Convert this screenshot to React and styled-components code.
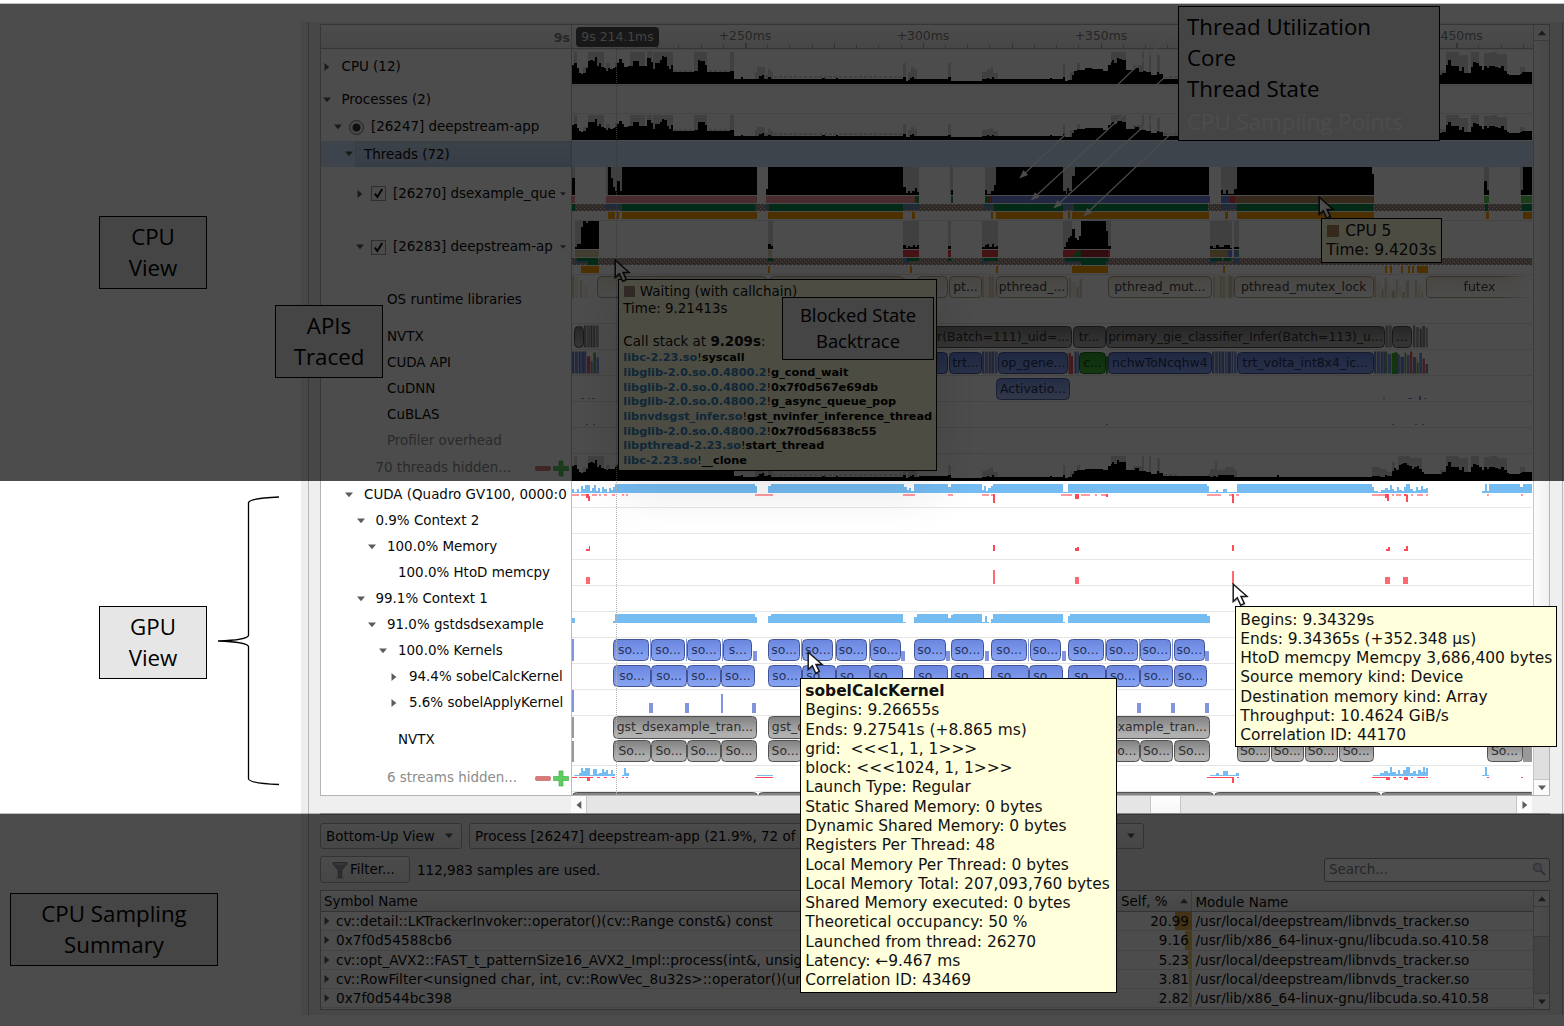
import React from "react";
import styled, { createGlobalStyle, css } from "styled-components";

const Global = createGlobalStyle`
  * { box-sizing: border-box; }
  body { margin: 0; background: #fff; overflow: hidden; }
`;

/* ---------- page ---------- */

const ui = css`font-family: "DejaVu Sans", sans-serif;`;

const Page = styled.div`
  ${ui}
  position: relative;
  display: flex;
  width: 1564px;
  height: 1026px;
  overflow: hidden;
  background: #fff;
  color: #0a0a0a;
  font-size: 13.45px;
`;

const Gutter = styled.aside`
  flex: 0 0 301px;
  padding-top: 216px;
`;

const Callout = styled.div`
  display: flex;
  flex-direction: column;
  justify-content: center;
  align-items: ${(p) => (p.$start ? "flex-start" : "center")};
  width: ${(p) => p.$w}px;
  height: ${(p) => p.$h || 73}px;
  margin: ${(p) => p.$m || "0"};
  padding: 0 0 ${(p) => (p.$start ? 0 : 2)}px ${(p) => (p.$start ? 8 : 0)}px;
  border: 1px solid #000;
  background: #e6e6e6;
  color: #000;
  font-family: "Open Sans", "Noto Sans", sans-serif;
  font-size: ${(p) => p.$size || 22.3}px;
  line-height: ${(p) => p.$line || 31}px;
  white-space: nowrap;
`;

const Floating = styled.div`
  position: absolute;
  left: ${(p) => p.$x}px;
  top: ${(p) => p.$y}px;
  line-height: 0;
`;

const Ghost = styled.span`
  margin-top: 2px;
  color: #fff;
`;

const Dim = styled.div`
  position: absolute;
  left: 0;
  right: 0;
  top: ${(p) => p.$y}px;
  height: ${(p) => p.$h}px;
  background: rgba(0, 0, 0, 0.7);
  box-shadow: 0 -1px 0 rgba(0, 0, 0, 0.25);
`;

/* ---------- window frame ---------- */

const Window = styled.main`
  flex: 1;
  height: 993px;
  margin-top: 22px;
  padding: 0 1px 0 7px;
  background: #eeeeee;
`;

const WindowBody = styled.div`
  height: 100%;
  padding: 2px 12px 0 11px;
  border: solid #b8b8b8;
  border-width: 0 1px;
  background: #efefef;
`;

const Timeline = styled.section`
  display: flex;
  height: 772px;
  border: 1px solid #b4b4b4;
  background: #fff;
`;

const Rows = styled.div`
  position: relative;
  width: 1212px;
  overflow: hidden;
`;

const Row = styled.div`
  display: flex;
  height: ${(p) => p.$h}px;
  background: ${(p) => (p.$on ? "#cfe3fa" : "transparent")};
`;

const TreeCell = styled.div`
  display: flex;
  align-items: center;
  flex: 0 0 251px;
  padding-left: ${(p) => p.$pad}px;
  padding-top: ${(p) => p.$drop}px;
  border-right: 1px solid #bcbcbc;
  overflow: hidden;
  white-space: nowrap;
  color: ${(p) => (p.$muted ? "#8c8c8c" : "#0a0a0a")};
`;

const ArrowSlot = styled.span`
  display: flex;
  flex: 0 0 ${(p) => (p.$tight ? 15 : 19)}px;
`;

const Label = styled.span`
  flex: 1;
  overflow: hidden;
  line-height: 20px;
`;

const Picked = styled.span`
  flex: 1;
  align-self: stretch;
  margin-left: -9px;
  padding-left: 8px;
  border: 1px solid #b9cbe3;
  background: linear-gradient(#c9dbf2, #bdd0e9);
  line-height: 25px;
`;

const Radio = styled.span`
  flex: 0 0 15px;
  height: 15px;
  margin-right: 7px;
  border: 1px solid #777;
  border-radius: 50%;
  background: radial-gradient(circle, #333 0 3.6px, #eee 4.4px);
`;

const Check = styled.span`
  display: flex;
  align-items: center;
  justify-content: center;
  flex: 0 0 15px;
  height: 15px;
  margin-right: 7px;
  border: 1px solid #999;
  background: #fafafa;
`;

const Tail = styled.span`
  display: flex;
  flex: 0 0 ${(p) => p.$w || 16}px;
  padding-left: ${(p) => p.$pad || 0}px;
`;

const Lane = styled.div`
  position: relative;
  flex: 0 0 960px;
  box-shadow: ${(p) => (p.$bare ? "none" : "inset 0 1px 0 #e6e6e6")};
  overflow: hidden;
`;

const Block = styled.span`
  ${ui}
  position: absolute;
  height: 22.4px;
  padding: 0 1px;
  border: 1px solid;
  border-radius: 4.5px;
  overflow: hidden;
  font-size: 12.4px;
  line-height: 20px;
  text-align: center;
  white-space: nowrap;
  ${(p) => tones[p.$tone]}
`;

const tones = {
  blue: "background:linear-gradient(#6a86de,#819ef0 75%,#88a3f0);border-color:#435596;color:#27325a;",
  pale: "background:linear-gradient(#7b97e8,#a9bdf4);border-color:#5268ab;color:#27325a;",
  gray: "background:linear-gradient(#828282,#b0b0b0 80%);border-color:#525252;color:#2e2e2e;",
  cream: "background:linear-gradient(#f3ecdc,#fff);border-color:#b7a68a;color:#444;",
  fade: "background:linear-gradient(#f3ecdc,#fff);border-color:#b7a68a;color:#444;border-right:0;border-radius:4.5px 0 0 4.5px;-webkit-mask-image:linear-gradient(90deg,#000 70%,transparent);",
  green: "background:linear-gradient(#2f9c2a,#46ba3c);border-color:#1f6b1c;color:#173c17;",
};

const Header = styled.div`
  display: flex;
  height: 24px;
  border-bottom: 1px solid #b4b4b4;
  background: linear-gradient(#fff, #ececec);
`;

const Origin = styled.div`
  flex: 0 0 251px;
  padding: 3px 1px 0 0;
  border-right: 1px solid #c8c8c8;
  color: #808080;
  font-size: 12.6px;
  font-weight: bold;
  line-height: 19px;
  text-align: right;
`;

const Ruler = styled.div`
  position: relative;
  flex: 0 0 960px;
`;

const TickLabel = styled.span`
  position: absolute;
  top: 3px;
  width: 80px;
  margin-left: -40px;
  color: #808080;
  font-size: 12.4px;
  line-height: 16px;
  text-align: center;
`;

const TimeBadge = styled.span`
  position: absolute;
  left: 4px;
  top: 2px;
  width: 83px;
  height: 20px;
  border-radius: 4px;
  background: #505050;
  color: #dedede;
  font-size: 12.4px;
  line-height: 20px;
  text-align: center;
`;

const Playhead = styled.i`
  position: absolute;
  left: 295px;
  top: 24px;
  bottom: 0;
  border-left: 1px dotted #b4b4b4;
`;

/* ---------- scrollbars ---------- */

const VBar = styled.div`
  display: flex;
  flex-direction: column;
  width: 16px;
  border-left: 1px solid #c6c6c6;
`;
const VBtn = styled.span`
  display: flex;
  align-items: center;
  justify-content: center;
  flex: 0 0 16px;
  border: solid #c6c6c6;
  border-width: ${(p) => (p.$down ? "1px 0 0" : "0 0 1px")};
  background: #fbfbfb;
`;
const VThumb = styled.span`
  height: ${(p) => p.$h}px;
  border-bottom: 1px solid #c0c0c0;
  background: linear-gradient(90deg, #fdfdfd, #f0f0f0);
`;
const VTrack = styled.span`flex: 1; background: #dfdfdf;`;

const HBar = styled.div`
  display: flex;
  height: 17px;
  margin-left: 251px;
  width: 961px;
  background: #e5e5e5;
`;
const HBtn = styled.span`
  display: flex;
  align-items: center;
  justify-content: center;
  width: 16px;
  border: solid #c6c6c6;
  border-width: ${(p) => (p.$right ? "0 0 0 1px" : "0 1px 0 0")};
  background: #fbfbfb;
`;
const HThumb = styled.span`
  width: 31px;
  margin: 0 auto 0 563px;
  border: solid #c6c6c6;
  border-width: 0 1px;
  background: linear-gradient(#fefefe, #f6f6f6);
`;

/* ---------- bottom pane ---------- */

const Pane = styled.section`
  border-top: 2px solid #b8b8b8;
  padding-top: 8px;
`;
const Bar = styled.div`
  display: flex;
  align-items: center;
  height: ${(p) => p.$h}px;
  margin-bottom: ${(p) => p.$mb}px;
`;
const Select = styled.div`
  display: flex;
  align-items: center;
  justify-content: space-between;
  width: ${(p) => p.$w}px;
  height: 26px;
  margin-right: 7px;
  padding: 0 8px 0 5px;
  border: 1px solid #aaa;
  border-radius: 3px;
  background: linear-gradient(#fbfbfb, #ebebeb);
  font-size: ${(p) => p.$size || 13.45}px;
  white-space: nowrap;
`;
const FilterButton = styled.div`
  display: flex;
  align-items: center;
  gap: 2px;
  width: 90px;
  height: 27px;
  padding-left: 11px;
  border: 1px solid #aaa;
  border-radius: 3px;
  background: linear-gradient(#fbfbfb, #ebebeb);
`;
const Count = styled.span`
  margin: 1px 0 0 7px;
  font-size: 13.5px;
`;
const Search = styled.div`
  display: flex;
  align-items: center;
  justify-content: space-between;
  width: 226px;
  height: 24px;
  margin-left: auto;
  padding: 0 3px 1px 4px;
  border: 1px solid #909090;
  border-radius: 3px;
  background: #fff;
  color: #808080;
`;
const Table = styled.div`
  display: flex;
  height: 120px;
  border: 1px solid #aaa;
  background: #fff;
`;
const Cols = styled.div`flex: 1;`;
const HeadRow = styled.div`
  display: flex;
  height: 21px;
  border-bottom: 1px solid #aaa;
  background: linear-gradient(#fff, #ececec);
  line-height: 23px;
`;
const DataRow = styled.div`
  display: flex;
  height: 19.3px;
  border-bottom: 1px solid #e4e4e4;
  font-size: 13.55px;
  line-height: 18.3px;
  white-space: nowrap;
`;
const NameCol = styled.div`
  display: flex;
  align-items: center;
  flex: 0 0 796px;
  gap: 5px;
  padding-left: ${(p) => (p.$head ? 3 : 2)}px;
  font-size: ${(p) => (p.$head ? 13.4 : 13.66)}px;
  overflow: hidden;
`;
const SelfCol = styled.div`
  flex: 0 0 75px;
  padding: 0 3px 0 ${(p) => (p.$head ? 4 : 0)}px;
  border-right: ${(p) => (p.$head ? "1px solid #ccc" : 0)};
  text-align: right;
  display: flex;
  align-items: center;
  justify-content: ${(p) => (p.$head ? "space-between" : "flex-end")};
  background: ${(p) =>
    p.$heat ? `linear-gradient(270deg, ${p.$color} ${p.$heat}px, transparent ${p.$heat}px)` : "none"};
`;
const ModuleCol = styled.div`flex: 1; padding-left: 3.5px;`;

/* ---------- tooltips ---------- */

const Tip = styled.div`
  position: absolute;
  left: ${(p) => p.$x}px;
  top: ${(p) => p.$y}px;
  width: ${(p) => p.$w}px;
  height: ${(p) => p.$h}px;
  padding: ${(p) => p.$pt || 2}px 0 0 4.3px;
  border: 1px solid #000;
  background: #ffffdc;
  color: #111;
  font-size: ${(p) => p.$size || 15.45}px;
  line-height: ${(p) => p.$line || 19.28}px;
  white-space: pre;
  box-shadow: ${(p) => (p.$glow ? "0 12px 50px rgba(0,0,0,.14)" : "none")};
`;
const Frame = styled.div`
  font-size: 11.3px;
  line-height: 14.68px;
  font-weight: bold;
  color: #000;
`;
const Lib = styled.span`color: #3584bd;`;
const Bang = styled.span`font-weight: normal;`;
const Swatch = styled.i`
  display: inline-block;
  width: ${(p) => p.$s}px;
  height: ${(p) => p.$s}px;
  margin: 0 ${(p) => p.$gap}px 0 1px;
  vertical-align: -1px;
  background: ${(p) => p.$c};
`;

/* ---------- glyphs ---------- */

const Tri = ({ dir = "down", s = 8, c = "#5c5c5c" }) => {
  const d = {
    down: "M0 1.5H8L4 6.3Z",
    up: "M0 6.3H8L4 1.5Z",
    right: "M1.5 0V8L6.3 4Z",
    left: "M6.3 0V8L1.5 4Z",
  }[dir];
  return (
    <svg width={s} height={s} viewBox="0 0 8 8">
      <path d={d} fill={c} />
    </svg>
  );
};

const Tick = () => (
  <svg width="11" height="11" viewBox="0 0 11 11">
    <path d="M1.8 5.6L4.4 9L9.2 1" fill="none" stroke="#111" strokeWidth="2" />
  </svg>
);

const PlusMinus = () => (
  <svg width="34" height="17" viewBox="0 0 34 17">
    <rect x="0.5" y="6.5" width="15" height="4" rx="1" fill="#d97a7a" stroke="#c66" strokeWidth=".7" />
    <path d="M24 1h4v5.5h5.5v4H28V16h-4v-5.500h-5.500v-4H24z" fill="#5fce62" stroke="#45b04a" strokeWidth=".7" />
  </svg>
);

const Pointer = () => (
  <svg width="22" height="26" viewBox="0 0 22 26">
    <path
      d="M1.200 1.200V18.500L5.300 14.700L8.700 22.200L12.300 20.500L9 13.400L14.900 13.200Z"
      transform="translate(1.500 1.500)" fill="#000" opacity=".2"
    />
    <path
      d="M1.200 1.200V18.500L5.300 14.700L8.700 22.200L12.300 20.500L9 13.400L14.900 13.200Z"
      fill="#fff" stroke="#1a1a1a" strokeWidth="1.5"
    />
  </svg>
);

const Funnel = () => (
  <svg width="16" height="18" viewBox="0 0 16 18">
    <path d="M1 1.500H15V3L9.800 9V16.500H6.200V9L1 3Z" fill="#999" stroke="#858585" />
    <path d="M2.500 3H13.500" stroke="#ddd" />
    <path d="M4 17H12" stroke="#888" opacity=".6" />
  </svg>
);

const Lens = () => (
  <svg width="14" height="14" viewBox="0 0 14 14">
    <path d="M8.500 8.500L12.500 12.500" stroke="#aaa" strokeWidth="2.200" strokeLinecap="round" />
    <circle cx="5.500" cy="5.500" r="4" fill="#dde4f2" stroke="#aab" strokeWidth="1.300" />
  </svg>
);

/* ---------- data: utilisation profile, three units per pixel ---------- */

const levels = (origin, base, text) =>
  text.split(",").map((t) => {
    const [x, y] = t.trim().split(" ").map(Number);
    return [origin + x / 3, (base - y) / 3];
  });

const USAGE = [
  ...levels(300, 252, "816 195,822 190,830 205,836 218,844 222,850 218,857 205,864 182,870 180,878 182,884 170,891 198,898 190,904 202,912 205,918 212,925 205,931 208,938 205,945 200,951 190,958 178,965 190,971 202,985 198,1000 182,1018 198,1040 175,1052 185,1060 208,1066 190,1080 180,1087 168,1093 172,1100 198,1107 208,1114 195,1120 216,1182 212,1194 180,1200 182,1214 195,1221 216,1290 213"),
  ...levels(730, 252, "12 236,34 232,40 238,80 236,88 228,95 224,102 236,115 232,122 238,276 233,284 238,317 233,323 238,520 231,527 243,533 240,540 234,547 230,553 238,567 236,655 232,662 243,757 238,770 234,777 238,785 232,792 237,960 233,966 237,1000 231,1005 243,1015 240,1027 225,1033 214,1040 210,1065 205,1087 207,1120 212,1135 195,1142 185,1147 180,1152 188,1160 173,1167 178,1175 180,1187 210,1215 203,1228 215,1240 213,1248 217,1262 226,1282 216,1288 222,1298 233"),
  ...levels(1150, 252, "38 236,180 240,190 233,198 240,205 230,240 232,253 240,262 238,380 232,387 238,666 233,690 238,705 230,712 236,726 215,732 202,738 212,746 192,752 188,760 184,770 190,778 194,785 205,792 198,800 196,806 208,815 220,822 225,875 220,888 195,895 180,902 197,928 212,935 200,942 220,962 200,970 186,978 190,988 198,995 210,1003 198,1010 205,1018 197,1036 201,1045 205,1052 197,1062 212,1070 222,1076 226,1110 223,1116 217,1145 252"),
];

const PEAKS = [
  ...levels(300, 252, "816 252,822 155,830 252,850 200,864 155,912 252,918 190,930 252,945 185,965 252,990 155,1035 252,1040 152,1055 252,1060 155,1120 252,1182 155,1221 252,1290 155"),
  ...levels(730, 252, "12 252,75 215,80 200,104 225,115 208,122 216,129 252,520 190,527 252,535 215,542 200,553 208,562 252,655 190,662 252,757 215,770 208,782 200,790 218,805 252,1000 190,1005 252,1020 215,1040 190,1050 252,1142 155,1187 252,1210 195,1235 155,1242 252,1257 155,1262 252,1282 165,1290 252"),
  ...levels(1150, 252, "0 252,25 165,31 252,175 225,180 205,195 180,202 210,225 200,253 212,262 252,666 200,690 205,712 218,726 180,735 205,745 155,780 165,815 252,870 210,888 155,928 165,955 252,962 155,988 252,1003 158,1020 155,1040 162,1070 252,1110 200,1124 252"),
];

const stepPath = (pts, base, k = 1) => {
  let d = `M${pts[0][0]} ${base}`;
  pts.forEach(([x, h], i) => {
    const y = base - h * k;
    const nx = i + 1 < pts.length ? pts[i + 1][0] : 1532;
    d += `V${y.toFixed(2)}H${nx.toFixed(2)}`;
  });
  return d + `V${base}Z`;
};

const LaneSvg = styled.svg`
  display: block;
`;

const Plot = ({ y, h, children }) => (
  <LaneSvg width="960" height={h} viewBox={`572 ${y} 960 ${h}`} shapeRendering="crispEdges">
    {children}
  </LaneSvg>
);

const Usage = ({ y, h, base, k }) => (
  <Plot y={y} h={h}>
    <path d={stepPath(PEAKS, base, k)} fill="#d8d8d8" />
    <path d={`M674 ${base - 13 * k}H732M774 ${base - 7 * k}H903M1164 ${base - 7 * k}H1178`} stroke="#d8d8d8" strokeWidth="2" strokeDasharray="3 2" />
    <path d={stepPath(USAGE, base, k)} fill="#000" />
  </Plot>
);

/* segments: [x1, x2, fill] */
const Band = ({ y, h, items, fill }) =>
  items.map(([a, b, c], i) => <rect key={i} x={a} y={y} width={b - a} height={h} fill={c || fill} />);

const Marks = ({ items, fill }) =>
  items.map(([x, y, w, h, c], i) => <rect key={i} x={x} y={y} width={w} height={h} fill={c || fill} />);

const Stripes = ({ from, to, y, h, colors, ragged = 0, gap = 0.6 }) => {
  const out = [];
  let x = from;
  for (let i = 0; x < to; i++) {
    const w = [2.3, 3.4, 1.8, 2.7][i % 4];
    const cut = ragged * ((i * 37) % 11) / 11 * h;
    out.push(<rect key={i} x={x} y={y + cut} width={Math.min(w, to - x)} height={h - cut} fill={colors[i % colors.length]} />);
    x += w + gap;
  }
  return <g shapeRendering="auto">{out}</g>;
};

const Defs = () => (
  <defs>
    <pattern id="wait" width="4" height="4" patternUnits="userSpaceOnUse">
      <rect width="4" height="4" fill="#a58b7f" />
      <rect x="0" y="0" width="1.300" height="1.300" fill="#eee" />
      <rect x="2" y="2" width="1.300" height="1.300" fill="#eee" />
    </pattern>
    <pattern id="ready" width="4" height="4" patternUnits="userSpaceOnUse">
      <rect width="4" height="4" fill="#a58b7f" />
      <path d="M0 0H3V2H0ZM2 2H4V4H2Z" fill="#4f8fcb" />
    </pattern>
  </defs>
);

const PINK = "#f5919b", GREEN = "#0c8d4a", ORANGE = "#ffa000", RED = "#e8404c", BLUE = "#7084d6", BROWN = "#ad8b5a";

const ThreadA = () => (
  <Plot y={167} h={53}>
    <Defs />
    <Band y={167} h={28} fill="#d2d2d2" items={[[572, 575], [606, 622], [903, 919], [950, 953], [984.5, 996], [1063, 1075], [1220.7, 1237], [1484, 1489], [1520, 1523]]} />
    <path
      d={stepPath([[572, 17], [574.500, 0], [608, 28], [610.500, 17], [612.700, 8], [615, 4], [617, 14], [619.500, 4], [621.700, 28], [756.700, 0], [766, 6], [768.300, 28], [903.300, 8], [905.500, 2], [908, 4], [910, 2], [912, 4], [915, 7], [917, 3], [919, 0], [951, 5], [953, 0], [984.500, 5], [987, 1], [991, 4], [993.500, 10], [995.500, 28], [1063.300, 4], [1065.500, 1], [1067, 7], [1069, 4], [1072, 19], [1074.500, 28], [1209, 0], [1220.700, 5], [1223, 1], [1225.500, 5], [1228, 1], [1234, 6], [1236.700, 28], [1372, 21], [1374, 0], [1484, 14], [1486.500, 5], [1489, 0], [1520.500, 5], [1522.700, 28]], 195)}
      fill="#000"
    />
    <Band y={196} h={7} items={[[572, 574.5, PINK], [606.3, 757, PINK], [766, 916, PINK], [915, 919, "#3b8f3f"], [951, 953, "#3b8f3f"], [984.5, 988.5, "#3b8f3f"], [988.5, 991.5, RED], [991.5, 1209.5, BLUE], [1220.700, 1230, BLUE], [1230, 1234.500, RED], [1234.500, 1374, BROWN], [1484, 1489, "#5fd05a"], [1520.500, 1532, "#5fd05a"]]} />
    <rect x="572" y="204" width="960" height="7" fill="url(#wait)" />
    <Band y={204} h={5} fill="url(#ready)" items={[[606, 622], [754, 757], [766, 770], [904, 919], [984, 995], [1063, 1075], [1220.7, 1237]]} />
    <Band y={204} h={7} fill={GREEN} items={[[572, 574.5], [621.7, 755], [769, 903.3], [994, 1063.3], [1074.3, 1208], [1236.7, 1373], [1485, 1487.5], [1522, 1532]]} />
    <Band y={212} h={6.5} fill={ORANGE} items={[[608, 615], [616.7, 619.3], [621.7, 757], [768.300, 903.300], [912.300, 914.700], [991, 993.300], [995.700, 1063.300], [1067.700, 1070], [1072.300, 1209.300], [1225, 1227.700], [1236.700, 1373.700], [1486.300, 1488.700], [1522.700, 1531.500]]} />
  </Plot>
);

const ThreadB = () => (
  <Plot y={220} h={54}>
    <Band y={221} h={28} fill="#d8d8d8" items={[[575, 588], [768, 772.5], [903.3, 919], [948.3, 950.7], [982, 997.7], [1063.3, 1072], [1106, 1110.500], [1210, 1232], [1234.300, 1238.700]]} />
    <path
      d={stepPath([[575, 2], [577, 5], [581, 22], [583, 28], [585.500, 26], [588, 28], [599.300, 0], [768.300, 5], [770.500, 3], [772.500, 0], [903.300, 4], [905.500, 1], [907.500, 3], [910, 2], [912.500, 4.500], [915, 2], [917, 4], [919, 0], [948.300, 3], [950.700, 0], [982, 2], [984.500, 4], [987, 5], [989, 2], [991.500, 5], [994, 2], [996, 3], [998, 0], [1063.500, 2], [1065.700, 7], [1068, 11], [1070, 13], [1072.300, 20], [1074.500, 11], [1076.700, 9], [1079, 13], [1081, 28], [1106, 18], [1108, 3], [1110.500, 0], [1210, 3], [1213, 1], [1216, 4], [1219, 2], [1224, 4], [1230, 1], [1232, 0], [1234.300, 2], [1238.700, 0]], 249)}
      fill="#000"
    />
    <Band y={250} h={7} items={[[575, 599, "#d9cba8"], [768.3, 772.3, "#e2d5b4"], [903.3, 919, RED], [948.3, 950.7, RED], [982, 997.7, RED], [1063.3, 1110.3, RED], [1081, 1108, "#a32c38"], [1074, 1081, "#3b8f3f"], [1210, 1227.7, "#c8aa6d"], [1227.7, 1232, BLUE], [1234.3, 1236.7, BLUE], [1236.7, 1238.7, "#5fb05a"]]} />
    <Band y={250} h={3} items={[[1074, 1078, RED]]} />
    <rect x="572" y="258" width="960" height="7" fill="url(#wait)" />
    <Band y={258} h={4.500} fill="url(#ready)" items={[[575, 590], [903.3, 909], [982, 988], [1064, 1082], [1106, 1109], [1210, 1216], [1234, 1239]]} />
    <Band y={258} h={3} fill={GREEN} items={[[577, 598], [768, 772.5], [907, 919], [948, 951], [984, 998], [1065, 1108], [1211, 1222], [1224, 1231]]} />
    <Band y={258} h={6.500} fill={GREEN} items={[[588, 598], [1081, 1106]]} />
    <Band y={266} h={6.500} fill={ORANGE} items={[[581.300, 599.300], [768, 770.300], [910, 912.300], [995.700, 997.700], [1072.300, 1108], [1223, 1225.300], [1385.300, 1387.300], [1390, 1392.300], [1401, 1403.300], [1407.700, 1410], [1412, 1414.300], [1416.700, 1427.700]]} />
  </Plot>
);

const Blocks = ({ y, top, tone, items }) =>
  items.map(([a, b, text, t], i) => (
    <Block key={i} $tone={t || tone} style={{ left: a - 572, width: b - a, top: y - top }}>
      {text}
    </Block>
  ));

const TAN = ["#e2d6c0", "#f6f0e2", "#d8c9ac"];
const GRAYS = ["#8d8d8d", "#a5a5a5", "#777"];
const BLUES = ["#6d82c8", "#7d93dc", "#5f73b8"];

const CALC = [[613, 651], [651.3, 687], [687.3, 721], [721, 754.7], [768.3, 802], [802, 836], [836, 869.500], [869.500, 903], [914.300, 948], [950.700, 984], [991.300, 1029], [1029.300, 1063], [1068, 1106], [1106, 1139.700], [1140, 1173], [1174, 1207]];
const KERN = [[613, 648.700], [651, 685], [687.300, 720.700], [723.300, 752.300], [768.300, 800], [802.300, 833.300], [836, 867], [870, 901], [914.300, 946], [950.700, 984.300], [991.300, 1027], [1030, 1061], [1068, 1103.700], [1106, 1137.700], [1140, 1170.700], [1174, 1204.700]];

const SKY = "#74bcf2", ROSE = "#ff9aa0", HOT = "#ff4a55", INDIGO = "#8095dc";

const CudaLane = () => (
  <Plot y={481} h={26}>
    <path
      fill={SKY}
      d={stepPath([[572, 4], [574, 1], [577, 4], [579, 1], [581, 7], [583, 4], [585, 8], [590, 2], [592, 5], [594, 8], [596, 2], [598, 5], [600, 1], [602, 6], [604, 4], [607, 1], [609, 5], [611, 3], [613, 6], [615, 8.700], [755, 7], [757, 0], [768, 7], [771, 8.700], [904, 6], [907, 3], [909, 5], [911, 2], [914, 8.700], [948, 6], [951, 8.700], [982, 3], [984, 7], [986, 2], [988, 5], [991, 7], [993, 8.700], [1063, 1], [1067.500, 8.700], [1207, 7], [1209, 1], [1216, 3], [1218, 1], [1223, 4], [1227, 1], [1236.700, 8.700], [1372, 6], [1374, 2], [1378, 1], [1381, 3], [1385, 5], [1388, 3], [1390, 8], [1392, 4], [1394, 2], [1397, 6], [1399, 3], [1402, 2], [1404, 6], [1406, 8.700], [1410, 4], [1413, 2], [1416, 6], [1418, 3], [1421, 7], [1423, 4], [1426, 5], [1428, 0], [1482, 2], [1485, 8.700], [1486.500, 2], [1489, 8.700], [1520, 6], [1523, 8.700]], 493)}
    />
    <Marks fill={ROSE} items={[[572, 494, 7, 2], [581, 494, 6, 2], [592, 494, 5, 2], [599, 494, 2, 2], [604, 494, 3, 2], [612, 494, 3, 2], [622, 494, 2, 2], [626, 494, 2, 2], [755, 494, 18, 2], [903, 494, 12, 2], [948, 494, 5, 2], [982, 494, 7, 2], [991, 494, 4, 2], [1061, 494, 11, 2], [1081, 494, 9, 2], [1095, 494, 2, 2], [1101, 494, 7, 2], [1207, 494, 14, 2], [1229, 494, 3, 2], [1236, 494, 3, 2], [1372, 494, 16, 2], [1392, 494, 2, 2], [1396, 494, 5, 2], [1404, 494, 4, 2], [1411, 494, 2, 2], [1417, 494, 6, 2], [1426, 494, 2, 2], [1487, 494, 2, 2], [1521, 494, 2, 2]]} />
    <Marks fill={HOT} items={[[586, 494, 3, 4], [588, 496, 2, 5], [993, 494, 2, 9], [1074.500, 494, 4, 5], [1106, 494, 2, 3], [1232, 494, 2, 9], [1385, 494, 4, 4], [1387, 498, 2, 3], [1404, 494, 2, 2], [1405.500, 495, 2, 7]]} />
  </Plot>
);

const GstLane = () => (
  <Plot y={611} h={26}>
    <path
      fill={SKY}
      d={stepPath([[572, 5], [574.500, 0], [613, 2], [615, 9], [755, 6], [757, 0], [768.300, 7], [770.500, 9], [903.300, 1], [905.500, 0], [914.300, 6], [917, 9], [948, 5], [950.700, 8], [953, 9], [982, 1], [985, 7], [986.500, 1], [988.500, 0], [991.300, 4], [993.300, 9], [1063, 1], [1065, 0], [1068, 7], [1070, 9], [1207, 7], [1209.500, 0]], 623)}
    />
  </Plot>
);

const KernelTicks = () => (
  <Plot y={637} h={26}>
    <Marks fill={INDIGO} items={[[572, 639, 2, 22], [649.500, 639, 1, 22], [686, 639, 1, 22], [721.500, 639, 1, 22], [752.500, 651, 4, 10], [801, 639, 1, 22], [834.500, 639, 1, 22], [868.500, 639, 1, 22], [901, 651, 4, 10], [946, 651, 4, 10], [984.500, 651, 4, 10], [1028, 639, 1, 22], [1061.500, 651, 4, 10], [1104.500, 639, 1, 22], [1138.500, 639, 1, 22], [1172, 639, 1, 22], [1205, 651, 4, 10]]} />
  </Plot>
);

const StreamsLane = () => (
  <Plot y={765} h={26}>
    <path
      fill={SKY}
      d={stepPath([[574, 1], [579, 3], [581, 8], [583, 5], [585, 8], [590, 1], [593, 7], [597, 2], [599, 3], [602, 7], [604, 4], [606, 6], [608, 2], [611, 6], [613, 2], [615, 0], [622, 1], [624, 8], [626, 3], [628.500, 0], [757, 1], [773, 0], [1210, 1], [1216, 3], [1219, 1], [1223, 5], [1228, 1], [1236, 3], [1239, 0], [1373, 1], [1380, 3], [1384, 5], [1388, 3], [1390, 9], [1392, 4], [1396, 2], [1398, 6], [1400, 2], [1403, 6], [1406, 9], [1410, 3], [1413, 5], [1416, 2], [1418, 6], [1421, 4], [1423, 9], [1425, 4], [1426, 8], [1428, 0], [1482, 1], [1485, 9], [1487, 1], [1488.500, 0]], 776)}
    />
    <Marks fill={HOT} items={[[572, 777, 5, 1], [579, 777, 14, 1], [587, 778, 3, 3], [597, 777, 3, 1], [604, 777, 3, 1], [612, 777, 3, 1], [622, 777, 2, 1], [626, 777, 2, 1], [755, 777, 18, 1], [1207, 777, 26, 1], [1232, 777, 2, 6], [1237, 777, 2, 1], [1372, 777, 18, 1], [1386, 777, 4, 3], [1393, 777, 3, 1], [1399, 777, 3, 1], [1404, 777, 4, 3], [1411, 777, 2, 1], [1417, 777, 8, 1], [1426, 777, 2, 1], [1487, 777, 2, 1], [1521, 777, 2, 1]]} />
  </Plot>
);

const dots = ([a, b]) => [a, b, "so..."];

const ROWS = [
  { at: 341.5, arrow: "right", text: "CPU (12)", h: 36, drop: 0, lane: () => <Usage y={49} h={36} base={84} k={1} /> },
  { at: 341.5, arrow: "down", text: "Processes (2)", h: 28 },
  { at: 371, arrow: "down", radio: true, text: "[26247] deepstream-app", h: 28, drop: 0, lane: () => <Usage y={113} h={28} base={139.500} k={0.75} /> },
  { at: 364, arrow: "down", text: "Threads (72)", h: 26, on: true, drop: 0 },
  { at: 393, arrow: "right", check: true, text: "[26270] dsexample_queue", h: 53, drop: 0, bare: true, lane: ThreadA },
  { at: 393, arrow: "down", check: true, text: "[26283] deepstream-ap", h: 54, drop: 0, lane: ThreadB },
  {
    at: 387, text: "OS runtime libraries", h: 49,
    lane: () => (
      <>
        <Plot y={274} h={49}>
          <Stripes from={572} to={578} y={276} h={22} colors={TAN} />
          <Stripes from={580} to={590} y={280} h={18} colors={TAN} ragged={1} gap={2} />
          <Stripes from={982} to={996} y={276} h={22} colors={TAN} />
          <Stripes from={1069} to={1082} y={278} h={20} colors={TAN} ragged={0.6} gap={1} />
          <Stripes from={1213} to={1234} y={276} h={22} colors={TAN} />
          <Stripes from={1374} to={1410} y={276} h={22} colors={TAN} ragged={0.8} gap={1} />
          <Stripes from={1415} to={1423} y={280} h={18} colors={TAN} ragged={0.9} />
        </Plot>
        <Blocks y={276} top={274} tone="cream" items={[[597, 766.700, ""], [770, 903.500, ""], [917, 948.300, "..."], [949, 982, "pt..."], [996, 1068, "pthread_..."], [1108, 1211.700, "pthread_mut..."], [1234, 1373.500, "pthread_mutex_lock"], [1426, 1532, "futex", "fade"]]} />
      </>
    ),
  },
  {
    at: 387, text: "NVTX", h: 26,
    lane: () => (
      <>
        <Plot y={323} h={26}>
          <Stripes from={584} to={599} y={325.500} h={22} colors={GRAYS} gap={0.4} />
          <Stripes from={1385.500} to={1392} y={325.500} h={22} colors={GRAYS} />
          <Stripes from={1413} to={1428} y={325.500} h={22} colors={GRAYS} ragged={0.2} />
        </Plot>
        <Blocks y={325.500} top={323} tone="gray" items={[[574, 584, ""], [770, 1072, "primary_gie_classifier_Infer(Batch=111)_uid=..."], [1072.700, 1105.700, "tr..."], [1106, 1385, "primary_gie_classifier_Infer(Batch=113)_u..."], [1392, 1412, "..."]]} />
      </>
    ),
  },
  {
    at: 387, text: "CUDA API", h: 26,
    lane: () => (
      <>
        <Plot y={349} h={26}>
          <Stripes from={572} to={584} y={351.500} h={22} colors={BLUES} />
          <Stripes from={584} to={599} y={351.500} h={22} colors={["#7d93dc", "#e0606a", "#7d93dc", "#5fb05a"]} ragged={0.6} />
          <Stripes from={982} to={998} y={351.500} h={22} colors={BLUES} />
          <Stripes from={1068.500} to={1073} y={353} h={21} colors={["#e0505a"]} ragged={0.4} gap={0} />
          <Stripes from={1074.500} to={1079} y={351.500} h={22} colors={BLUES} />
          <Marks fill="#3a9f36" items={[[1106, 356, 2, 18]]} />
          <Stripes from={1212} to={1237} y={351.500} h={22} colors={BLUES} />
          <Stripes from={1374} to={1385} y={351.500} h={22} colors={BLUES} />
          <Stripes from={1385} to={1410} y={351.500} h={22} colors={["#5fb05a", "#7d93dc", "#6d82c8"]} ragged={0.3} />
          <Marks fill="#3fae34" items={[[1392, 353, 6, 21]]} />
          <Stripes from={1410} to={1428} y={351.500} h={22} colors={["#e0606a", "#7d83ac", "#5fb05a", "#7d93dc"]} ragged={0.7} />
        </Plot>
        <Blocks y={351.500} top={349} tone="blue" items={[[917, 948.300, "..."], [949, 982, "trt..."], [998.300, 1068, "op_gene..."], [1079, 1106, "c...", "green"], [1108, 1211.700, "nchwToNcqhw4"], [1237, 1373.700, "trt_volta_int8x4_ic..."]]} />
      </>
    ),
  },
  {
    at: 387, text: "CuDNN", h: 26,
    lane: () => (
      <>
        <Plot y={375} h={26}>
          <Marks fill="#8c8cc8" items={[[581, 398, 3, 1], [588, 398, 2, 1], [592, 398, 3, 1], [1383, 398, 2, 1], [1408, 398, 4, 1], [1419, 396, 2, 4], [1424, 398, 2, 1]]} />
        </Plot>
        <Blocks y={377.500} top={375} tone="pale" items={[[996, 1070, "Activatio..."]]} />
      </>
    ),
  },
  {
    at: 387, text: "CuBLAS", h: 26,
    lane: () => (
      <Plot y={401} h={26}>
        <Marks fill="#7fb87f" items={[[586, 424, 2, 1], [593, 424, 2, 1], [1106, 424, 2, 1], [1392, 424, 2, 1], [1415, 424, 2, 1], [1422, 424, 2, 1]]} />
      </Plot>
    ),
  },
  { at: 387, text: "Profiler overhead", h: 26, muted: true },
  { at: 375.5, text: "70 threads hidden...", h: 28, muted: true, pm: true, lane: () => <Usage y={453} h={28} base={480.500} k={0.76} /> },
  { at: 364, arrow: "down", text: "CUDA (Quadro GV100, 0000:01:00.0)", h: 26, bare: true, lane: CudaLane, clip: 3 },
  { at: 375.5, arrow: "down", text: "0.9% Context 2", h: 26 },
  {
    at: 387, arrow: "down", text: "100.0% Memory", h: 26,
    lane: () => (
      <Plot y={533} h={26}>
        <Marks fill={HOT} items={[[586, 548.500, 4, 2], [588.500, 546, 1.500, 4], [993, 545, 2.300, 6], [1074.500, 548, 4.500, 3], [1077, 547, 2, 2], [1232, 545, 2.300, 6], [1385.500, 549, 4, 2], [1387.500, 547, 2, 3], [1404, 549, 4, 2], [1406, 546, 2, 4]]} />
      </Plot>
    ),
  },
  {
    at: 398, text: "100.0% HtoD memcpy", h: 26,
    lane: () => (
      <Plot y={559} h={26}>
        <Marks fill="#ff6a72" items={[[586, 577, 4, 6.500], [993, 570, 2.300, 13.500], [1074.500, 577, 4.500, 6.500], [1232, 571, 2, 13], [1385.300, 577, 4.300, 6.500], [1403.300, 577, 4.300, 6.500]]} />
      </Plot>
    ),
  },
  { at: 375.5, arrow: "down", text: "99.1% Context 1", h: 26 },
  { at: 387, arrow: "down", text: "91.0% gstdsdsexample", h: 26, lane: GstLane },
  {
    at: 398, arrow: "down", text: "100.0% Kernels", h: 26,
    lane: () => (
      <>
        <KernelTicks />
        <Blocks y={639} top={637} tone="blue" items={KERN.map(([a, b]) => [a, b, b - a < 30 ? "s..." : "so..."])} />
      </>
    ),
  },
  {
    at: 409, arrow: "right", text: "94.4% sobelCalcKernel", h: 26,
    lane: () => <Blocks y={664.700} top={663} tone="blue" items={CALC.map(dots)} />,
  },
  {
    at: 409, arrow: "right", text: "5.6% sobelApplyKernel", h: 26,
    lane: () => (
      <Plot y={689} h={26}>
        <Marks fill={INDIGO} items={[[572, 690, 2, 22], [649, 703, 4, 10], [685, 703, 4, 10], [721, 694, 1.700, 19], [752.300, 703, 4, 10], [800, 703, 4, 10], [1137.300, 703, 4, 10], [1171, 703, 4, 10], [1205, 703, 4, 10]]} />
      </Plot>
    ),
  },
  {
    at: 398, text: "NVTX", h: 50, drop: 0,
    lane: () => (
      <>
        <Plot y={715} h={50}>
          <Marks fill="#999" items={[[572, 717, 2, 21], [572, 741, 2, 21], [1523, 741, 9, 21]]} />
        </Plot>
        <Blocks y={716.300} top={715} tone="gray" items={[[613, 756.700, "gst_dsexample_tran..."], [768.300, 904, "gst_dsexample_tra..."], [1068, 1209.500, "gst_dsexample_tran..."]]} />
        <Blocks y={740} top={715} tone="gray" items={[[613, 651], [651, 687], [687, 721], [721, 757], [768.300, 802], [802, 836], [1106, 1139.700], [1140, 1173], [1174, 1209.500], [1237, 1270], [1270.500, 1304], [1304.500, 1338], [1338.500, 1374], [1486.500, 1522.500]].map(([a, b]) => [a, b, "So..."])} />
      </>
    ),
  },
  { at: 387, text: "6 streams hidden...", h: 26, muted: true, pm: true, drop: 0, lane: StreamsLane },
  {
    at: 341, text: "", h: 4,
    lane: () => <Blocks y={792} top={791} tone="gray" items={[[572, 757.500, ""], [757.500, 1214, ""], [1214, 1380.500, ""], [1380.500, 1536, ""]]} />,
  },
];

const TreeRow = ({ r }) => {
  const extra = r.radio || r.check;
  const L = r.on ? Picked : Label;
  return (
    <Row $h={r.h} $on={r.on}>
      <TreeCell $pad={r.at - 340 - (extra ? 18 : 0)} $drop={r.drop ?? 2} $muted={r.muted}>
        <ArrowSlot $tight={extra}>{r.arrow && <Tri dir={r.arrow} />}</ArrowSlot>
        {r.radio && <Radio />}
        {r.check && <Check><Tick /></Check>}
        <L>{r.text}</L>
        {r.check && <Tail $w={16} $pad={5}><Tri s={6} /></Tail>}
        {r.pm && <Tail $w={36}><PlusMinus /></Tail>}
        {r.clip && <Tail $w={r.clip} />}
      </TreeCell>
      <Lane $bare={r.bare || r.on}>{r.lane && <r.lane />}</Lane>
    </Row>
  );
};

const RULER = Array.from({ length: 43 }, (_, i) => 589.5 + i * 22.22);
const STAMPS = [["+250ms", 173], ["+300ms", 351], ["+350ms", 529], ["+450ms", 884.5]];

const SYMBOLS = [
  ["cv::detail::LKTrackerInvoker::operator()(cv::Range const&) const", "20.99", "/usr/local/deepstream/libnvds_tracker.so", 17, "#e5a94e"],
  ["0x7f0d54588cb6", "9.16", "/usr/lib/x86_64-linux-gnu/libcuda.so.410.58", 7, "#e6c75c"],
  ["cv::opt_AVX2::FAST_t_patternSize16_AVX2_Impl::process(int&, unsigned char)", "5.23", "/usr/local/deepstream/libnvds_tracker.so", 4, "#e6d06a"],
  ["cv::RowFilter<unsigned char, int, cv::RowVec_8u32s>::operator()(unsigned char)", "3.81", "/usr/local/deepstream/libnvds_tracker.so", 3, "#e6d87a"],
  ["0x7f0d544bc398", "2.82", "/usr/lib/x86_64-linux-gnu/libcuda.so.410.58", 3, "#e6d87a"],
];

const STACK = [
  ["libc-2.23.so", "syscall"],
  ["libglib-2.0.so.0.4800.2", "g_cond_wait"],
  ["libglib-2.0.so.0.4800.2", "0x7f0d567e69db"],
  ["libglib-2.0.so.0.4800.2", "g_async_queue_pop"],
  ["libnvdsgst_infer.so", "gst_nvinfer_inference_thread"],
  ["libglib-2.0.so.0.4800.2", "0x7f0d56838c55"],
  ["libpthread-2.23.so", "start_thread"],
  ["libc-2.23.so", "__clone"],
];

const KERNEL_INFO = `Begins: 9.26655s
Ends: 9.27541s (+8.865 ms)
grid:  <<<1, 1, 1>>>
block: <<<1024, 1, 1>>>
Launch Type: Regular
Static Shared Memory: 0 bytes
Dynamic Shared Memory: 0 bytes
Registers Per Thread: 48
Local Memory Per Thread: 0 bytes
Local Memory Total: 207,093,760 bytes
Shared Memory executed: 0 bytes
Theoretical occupancy: 50 %
Launched from thread: 26270
Latency: ←9.467 ms
Correlation ID: 43469`;

const COPY_INFO = `Begins: 9.34329s
Ends: 9.34365s (+352.348 µs)
HtoD memcpy Memcpy 3,686,400 bytes
Source memory kind: Device
Destination memory kind: Array
Throughput: 10.4624 GiB/s
Correlation ID: 44170`;

const Arrows = () => (
  <svg width="170" height="210" viewBox="1010 15 170 210">
    <defs>
      <marker id="tip" markerWidth="9" markerHeight="8" refX="8" refY="3.500" orient="auto" markerUnits="userSpaceOnUse">
        <path d="M0 0L8.500 3.500L0 7Z" fill="#fff" />
      </marker>
    </defs>
    {["M1178 27L1020 178", "M1178 65L1031.500 200", "M1178 95L1054 208", "M1178 127L1084 216"].map((d) => (
      <path key={d} d={d} stroke="#fff" strokeWidth="1.100" markerEnd="url(#tip)" />
    ))}
  </svg>
);

const Brace = () => (
  <svg width="66" height="292" viewBox="216 495 66 292">
    <path
      d="M279 497Q251 498 248.500 502.500V635.500Q247 640 218 641Q247 642 248.500 646.500V779Q251 783.500 279 784.500"
      fill="none" stroke="#000" strokeWidth="1.300"
    />
  </svg>
);

export default function App() {
  return (
    <Page>
      <Global />
      <Gutter>
        <Callout $w={108} $m="0 0 0 99px"><span>CPU</span><span>View</span></Callout>
        <Callout $w={108} $m="317px 0 0 99px"><span>GPU</span><span>View</span></Callout>
        <Callout $w={208} $m="214px 0 0 10px"><span>CPU Sampling</span><span>Summary</span></Callout>
      </Gutter>

      <Window>
        <WindowBody>
          <Timeline>
            <Rows>
              <Header>
                <Origin>9s</Origin>
                <Ruler>
                  <Plot y={25} h={23}>
                    {RULER.map((x, i) => (
                      <rect key={i} x={x} y={(i + 1) % 4 === 0 ? 43 : 45} width={(i + 1) % 4 === 0 ? 1.5 : 1} height="5" fill="#b0b0b0" />
                    ))}
                  </Plot>
                  {STAMPS.map(([text, left]) => <TickLabel key={text} style={{ left }}>{text}</TickLabel>)}
                  <TimeBadge>9s 214.1ms</TimeBadge>
                </Ruler>
              </Header>
              {ROWS.map((r, i) => <TreeRow key={i} r={r} />)}
              <Playhead />
            </Rows>
            <VBar>
              <VBtn><Tri dir="up" /></VBtn>
              <VThumb $h={705} />
              <VTrack />
              <VBtn $down><Tri /></VBtn>
            </VBar>
          </Timeline>
          <HBar>
            <HBtn><Tri dir="left" /></HBtn>
            <HThumb />
            <HBtn $right><Tri dir="right" /></HBtn>
          </HBar>
          <Pane>
            <Bar $h={26} $mb={7}>
              <Select $w={142}>Bottom-Up View<Tri /></Select>
              <Select $w={675} $size={13.52}>Process [26247] deepstream-app (21.9%, 72 of 72 threads)<Tri /></Select>
            </Bar>
            <Bar $h={27} $mb={7}>
              <FilterButton><Funnel />Filter...</FilterButton>
              <Count>112,983 samples are used.</Count>
              <Search>Search...<Lens /></Search>
            </Bar>
            <Table>
              <Cols>
                <HeadRow>
                  <NameCol $head>Symbol Name</NameCol>
                  <SelfCol $head>Self, %<Tri dir="up" /></SelfCol>
                  <ModuleCol>Module Name</ModuleCol>
                </HeadRow>
                {SYMBOLS.map(([name, self, mod, heat, color]) => (
                  <DataRow key={name}>
                    <NameCol><Tri dir="right" />{name}</NameCol>
                    <SelfCol $heat={heat} $color={color}>{self}</SelfCol>
                    <ModuleCol>{mod}</ModuleCol>
                  </DataRow>
                ))}
              </Cols>
              <VBar>
                <VBtn><Tri dir="up" /></VBtn>
                <VThumb $h={30} />
                <VTrack />
                <VBtn $down><Tri /></VBtn>
              </VBar>
            </Table>
          </Pane>
        </WindowBody>
      </Window>

      <Tip $x={1321} $y={218} $w={121} $h={45} $pt={3}>
        <Swatch $s={12} $gap={6} $c="#ad8b5a" />CPU 5{"\n"}Time: 9.4203s
      </Tip>
      <Tip $x={618} $y={279} $w={319} $h={192} $size={13.45} $line={16.8} $pt={4} $glow>
        <div><Swatch $s={11} $gap={4.5} $c="#a58b7f" />Waiting (with callchain)</div>
        <div>Time: 9.21413s</div>
        <div> </div>
        <div>Call stack at <b>9.209s</b>:</div>
        {STACK.map(([lib, fn], i) => (
          <Frame key={i}><Lib>{lib}</Lib><Bang>!</Bang>{fn}</Frame>
        ))}
      </Tip>
      <Floating $x={1010} $y={15}><Arrows /></Floating>
      <Floating $x={1178} $y={6}>
        <Callout $w={262} $h={135} $start>
          <span>Thread Utilization</span><span>Core</span><span>Thread State</span><Ghost>CPU Sampling Points</Ghost>
        </Callout>
      </Floating>
      <Floating $x={782} $y={297}>
        <Callout $w={152} $h={63} $size={18.4} $line={26}><span>Blocked State</span><span>Backtrace</span></Callout>
      </Floating>
      <Floating $x={275} $y={305}>
        <Callout $w={108}><span>APIs</span><span>Traced</span></Callout>
      </Floating>
      <Floating $x={614} $y={259}><Pointer /></Floating>
      <Floating $x={1318} $y={196}><Pointer /></Floating>

      <Dim $y={4} $h={477} />
      <Dim $y={814} $h={212} />

      <Floating $x={216} $y={495}><Brace /></Floating>
      <Floating $x={807} $y={651}><Pointer /></Floating>
      <Floating $x={1232} $y={583}><Pointer /></Floating>
      <Tip $x={800} $y={678} $w={317} $h={315} $pt={3}><b>sobelCalcKernel</b>{"\n" + KERNEL_INFO}</Tip>
      <Tip $x={1235} $y={606} $w={322} $h={141} $pt={3.500}>{COPY_INFO}</Tip>
    </Page>
  );
}
